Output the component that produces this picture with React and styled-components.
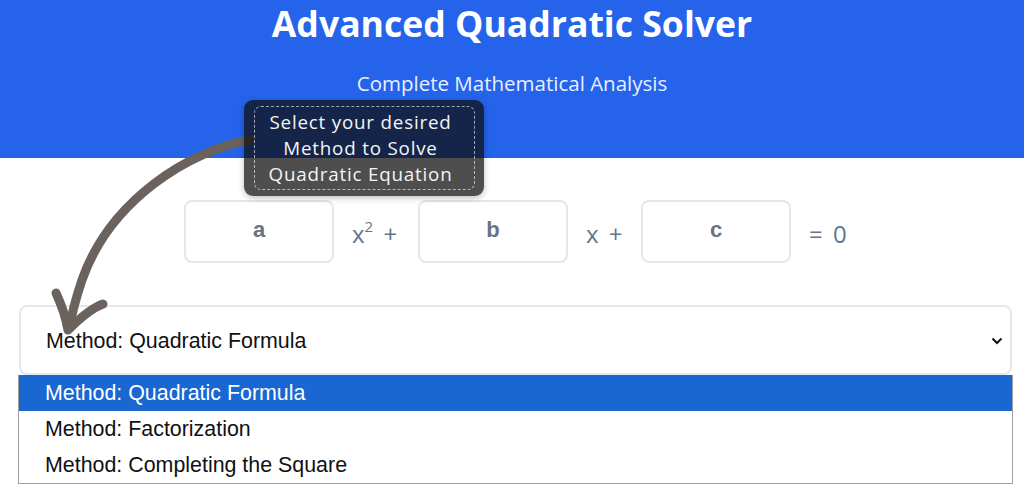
import React from "react";
import styled, { createGlobalStyle } from "styled-components";

const GlobalStyle = createGlobalStyle`
  html, body {
    margin: 0;
    padding: 0;
    background: #ffffff;
  }
  body {
    font-family: "Open Sans", "Liberation Sans", sans-serif;
    width: 1024px;
    height: 504px;
    overflow: hidden;
  }
`;

const Page = styled.div`
  position: relative;
  width: 1024px;
  height: 504px;
`;

const Header = styled.header`
  height: 158px;
  box-sizing: border-box;
  padding-top: 4px;
  background: #2563eb;
  color: #ffffff;
  display: flex;
  flex-direction: column;
  align-items: center;
`;

const Title = styled.h1`
  margin: 0;
  font-family: "Open Sans", sans-serif;
  font-weight: 700;
  font-size: 35.6px;
  line-height: 39px;
`;

const Subtitle = styled.p`
  margin: 28px 0 0;
  font-family: "Open Sans", sans-serif;
  font-size: 20.5px;
  line-height: 24px;
  color: #e8efff;
`;

const Main = styled.main`
  padding: 42px 12px 0 19px;
`;

const EquationRow = styled.div`
  display: flex;
  align-items: center;
  justify-content: center;
  gap: 18px;
`;

const CoefBox = styled.div`
  width: 150px;
  height: 63px;
  box-sizing: border-box;
  border: 2px solid #e2e8f0;
  border-radius: 8px;
  display: flex;
  align-items: center;
  justify-content: center;
  padding-bottom: 4px;
  font-family: "Liberation Sans", Arial, sans-serif;
  font-weight: 700;
  font-size: 22px;
  color: #6b7280;
`;

const Term = styled.span`
  font-family: "Open Sans", sans-serif;
  font-weight: 500;
  font-size: 24px;
  word-spacing: 4px;
  color: #64748b;
  width: ${(p) => p.$w}px;
  white-space: nowrap;
  padding-top: 4px;
  sup {
    font-size: 15px;
    vertical-align: 11px;
    line-height: 0;
  }
`;

const SelectWrap = styled.div`
  position: relative;
  margin-top: 42px;
`;

const SelectBox = styled.div`
  height: 70px;
  box-sizing: border-box;
  border: 2px solid #e2e8f0;
  border-radius: 8px;
  display: flex;
  align-items: center;
  justify-content: space-between;
  padding: 2px 7px 0 25px;
  font-family: "Liberation Sans", Arial, sans-serif;
  font-size: 21.4px;
  color: #111111;
`;

const Chevron = styled.svg`
  width: 12px;
  height: 8px;
`;

const Menu = styled.ul`
  position: absolute;
  left: -1px;
  right: -1px;
  top: 70px;
  margin: 0;
  padding: 0;
  list-style: none;
  background: #ffffff;
  border: 1px solid #9e9e9e;
  border-top: none;
  font-family: "Liberation Sans", Arial, sans-serif;
  font-size: 21.4px;
`;

const MenuItem = styled.li`
  height: 36px;
  display: flex;
  align-items: center;
  padding-left: 26px;
  background: ${(p) => (p.$active ? "#1a67d2" : "transparent")};
  color: ${(p) => (p.$active ? "#ffffff" : "#111111")};
`;

const Tooltip = styled.div`
  position: absolute;
  left: 244px;
  top: 100px;
  width: 240px;
  height: 96px;
  box-sizing: border-box;
  padding: 6px 9px 6px 10px;
  border-radius: 9px;
  background: rgba(16, 16, 16, 0.74);
  box-shadow: 0 2px 6px rgba(0, 0, 0, 0.25);
  z-index: 3;
`;

const TooltipInner = styled.div`
  height: 100%;
  box-sizing: border-box;
  border: 1.5px dashed rgba(255, 255, 255, 0.6);
  border-radius: 7px;
  display: flex;
  flex-direction: column;
  align-items: center;
  justify-content: center;
  padding-right: 8px;
  color: #f4f4f4;
  font-family: "Open Sans", sans-serif;
  font-size: 18.8px;
  line-height: 26px;
  letter-spacing: 0.8px;
  text-align: center;
`;

const ArrowLayer = styled.svg`
  position: absolute;
  left: 0;
  top: 0;
  width: 1024px;
  height: 504px;
  pointer-events: none;
  z-index: 2;
`;

const methods = [
  "Method: Quadratic Formula",
  "Method: Factorization",
  "Method: Completing the Square",
];

export default function App() {
  return (
    <Page>
      <GlobalStyle />
      <Header>
        <Title>Advanced Quadratic Solver</Title>
        <Subtitle>Complete Mathematical Analysis</Subtitle>
      </Header>
      <Main>
        <EquationRow>
          <CoefBox>a</CoefBox>
          <Term $w={48}>
            x<sup>2</sup> +
          </Term>
          <CoefBox>b</CoefBox>
          <Term $w={37}>x +</Term>
          <CoefBox>c</CoefBox>
          <Term $w={38}>= 0</Term>
        </EquationRow>
        <SelectWrap>
          <SelectBox>
            <span>{methods[0]}</span>
            <Chevron viewBox="0 0 12 8">
              <path d="M1.5 1.5 L6 6 L10.5 1.5" fill="none" stroke="#111" strokeWidth="2" />
            </Chevron>
          </SelectBox>
          <Menu>
            {methods.map((m, i) => (
              <MenuItem key={m} $active={i === 0}>
                {m}
              </MenuItem>
            ))}
          </Menu>
        </SelectWrap>
      </Main>
      <ArrowLayer viewBox="0 0 1024 504">
        <g fill="none" stroke="#6b625e" strokeLinecap="round" strokeLinejoin="round">
          <path d="M250 140 C 190 150, 110 200, 82 280 C 76 298, 72 312, 70 326" strokeWidth="9" />
          <path d="M56 293 C 62 306, 66 318, 68 330 C 80 318, 92 308, 103 304" strokeWidth="9" />
        </g>
      </ArrowLayer>
      <Tooltip>
        <TooltipInner>
          <span>Select your desired</span>
          <span>Method to Solve</span>
          <span>Quadratic Equation</span>
        </TooltipInner>
      </Tooltip>
    </Page>
  );
}
